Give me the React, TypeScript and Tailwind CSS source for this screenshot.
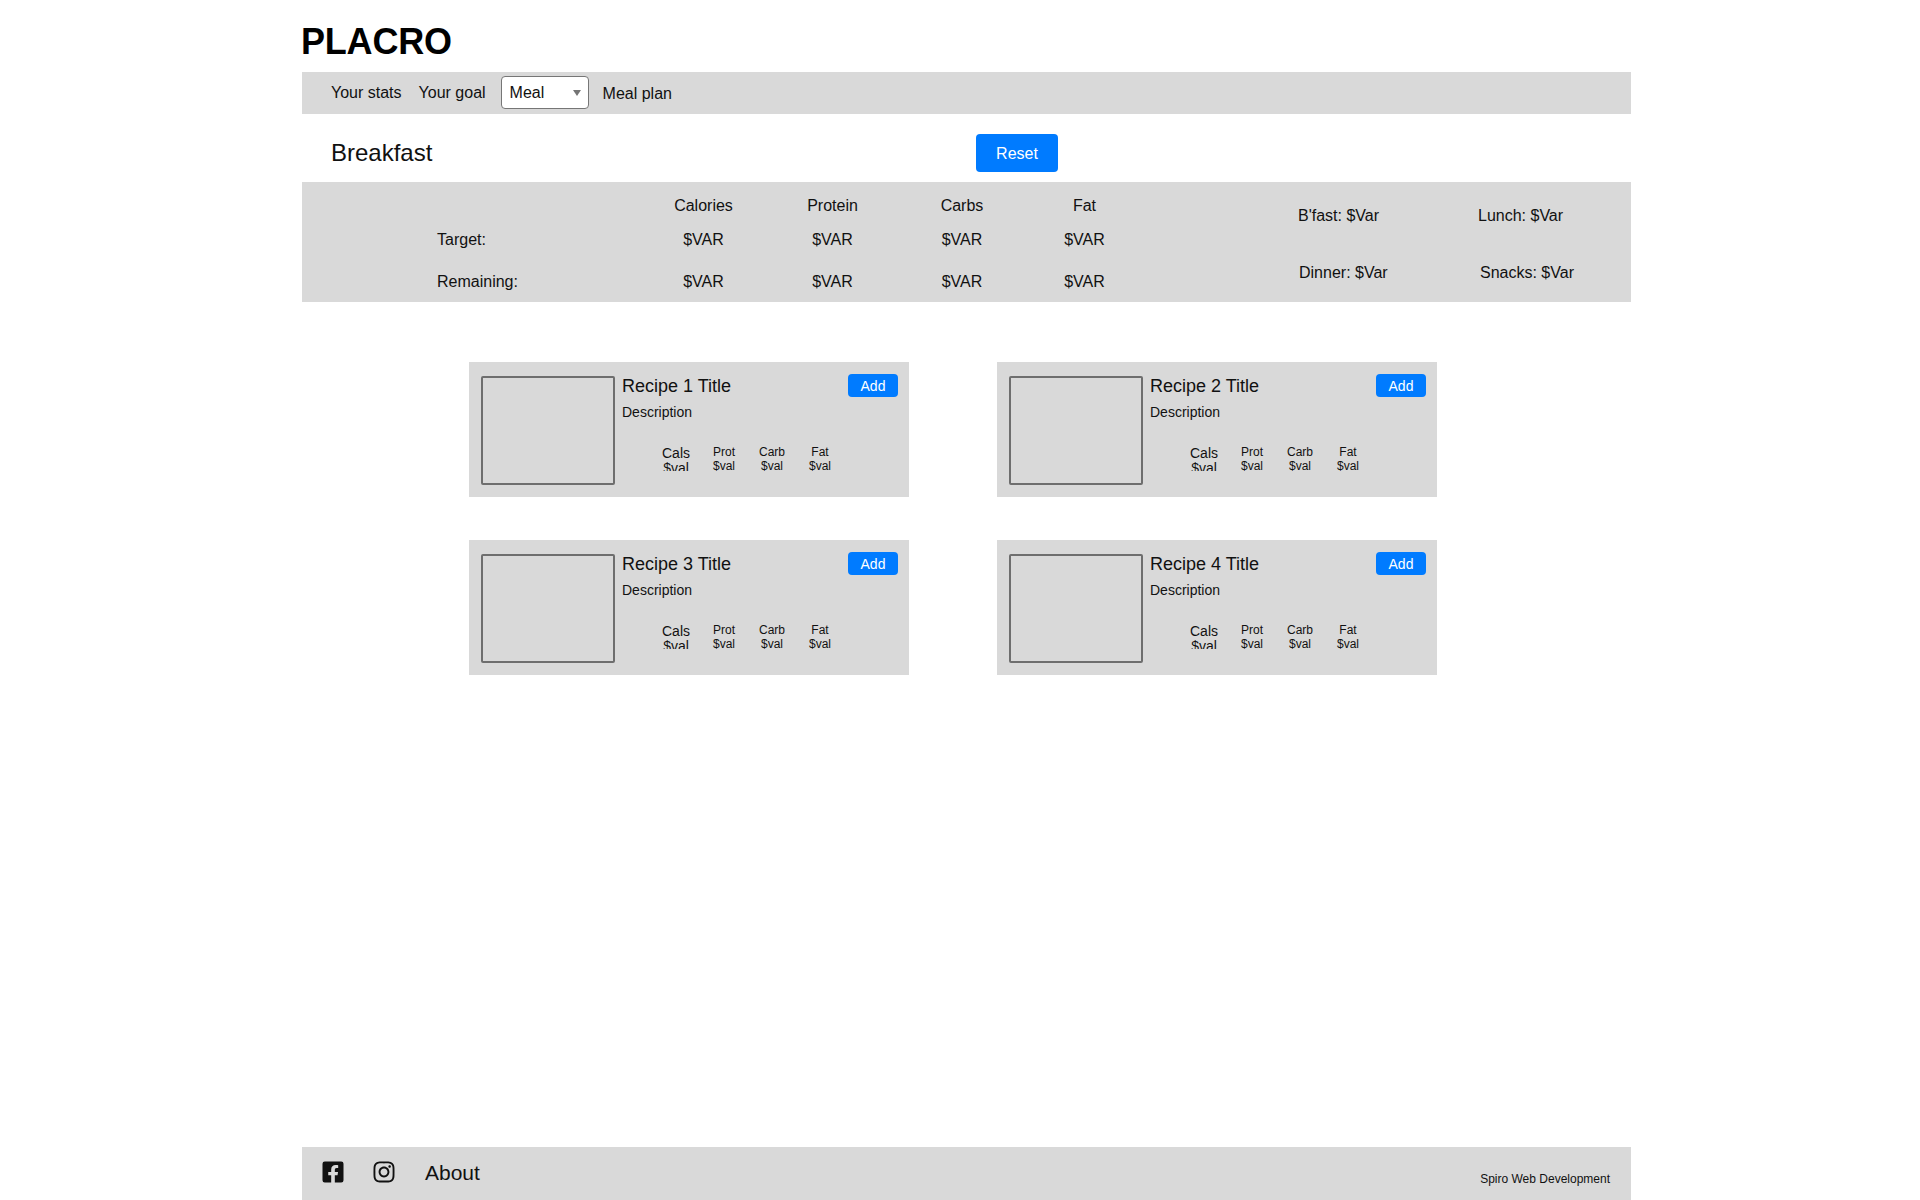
import { FaFacebookSquare, FaInstagram } from "react-icons/fa";

const FONT = "[font-family:'Liberation_Sans',Arial,sans-serif]";

function RecipeCard({ n }: { n: number }) {
  return (
    <div className="flex w-[440px] h-[135px] bg-[#d9d9d9] pt-[14px] pl-[12px]">
      <div className="w-[134px] h-[109px] border-2 border-[#6e6e6e] rounded-[2px] shrink-0" />
      <div className="ml-[7px] w-[276px] flex flex-col">
        <div className="flex justify-between items-start">
          <div className="text-[18px] leading-[20px] text-[#111] mt-0">Recipe {n} Title</div>
          <button className="w-[50px] h-[23px] bg-[#007bff] rounded-[4px] text-white text-[14px] leading-[24px] -mt-[2px]">
            Add
          </button>
        </div>
        <div className="text-[14px] leading-[16px] text-[#111] mt-[7px]">Description</div>
        <div className="flex ml-[30px] mt-[25px] text-[#111]">
          <div className="w-[48px] h-[25px] overflow-hidden text-center text-[14px] leading-[15px] mt-[1px]">
            <div>Cals</div>
            <div>$val</div>
          </div>
          {["Prot", "Carb", "Fat"].map((m) => (
            <div key={m} className="w-[48px] text-center text-[12px] leading-[14px]">
              <div>{m}</div>
              <div>$val</div>
            </div>
          ))}
        </div>
      </div>
    </div>
  );
}

export default function App() {
  const rows = [
    ["", "Calories", "Protein", "Carbs", "Fat"],
    ["Target:", "$VAR", "$VAR", "$VAR", "$VAR"],
    ["Remaining:", "$VAR", "$VAR", "$VAR", "$VAR"],
  ];
  return (
    <div className={`${FONT} min-h-screen flex flex-col items-start bg-white text-[#111]`}>
      <div className="ml-[302px] w-[1329px] h-[1200px] flex flex-col">
        <h1 className="h-[72px] pt-[20px] -ml-[1px] text-[36px] leading-[44px] font-bold text-black tracking-[-0.2px]">PLACRO</h1>

        <nav className="h-[42px] bg-[#d9d9d9] flex items-center pl-[29px] text-[16px]">
          <span>Your stats</span>
          <span className="ml-[17px]">Your goal</span>
          <div className="relative ml-[15px] -mt-[1px] w-[88px] h-[33px] bg-white border border-[#767676] rounded-[4px] flex items-center pl-[8px]">
            <span>Meal</span>
            <span className="absolute right-[7px] top-[13px] w-0 h-0 border-l-[4px] border-r-[4px] border-t-[6px] border-l-transparent border-r-transparent border-t-[#757575]" />
          </div>
          <span className="ml-[14px] mt-[2px]">Meal plan</span>
        </nav>

        <div className="h-[68px] flex items-center pl-[29px]">
          <h2 className="text-[24px] leading-[28px] w-[645px] mt-[9px]">Breakfast</h2>
          <button className="w-[82px] h-[38px] bg-[#007bff] rounded-[4px] text-white text-[16px] pt-[2px] mt-[10px]">Reset</button>
        </div>

        <section className="h-[120px] bg-[#d9d9d9] flex text-[16px]">
          <div className="ml-[135px] pt-[13px] grid grid-cols-[202px_129px_129px_130px_115px] auto-rows-min">
            {rows.map((r, i) =>
              r.map((c, j) => (
                <div
                  key={`${i}-${j}`}
                  className={`${j === 0 ? "text-left" : "text-center"} leading-[22px] ${i === 0 ? "h-[34px]" : i === 1 ? "h-[42px]" : "h-[22px]"}`}
                >
                  {c}
                </div>
              ))
            )}
          </div>
          <div className="ml-[156px] pt-[23px] flex flex-col gap-[35px] leading-[22px]">
            <div className="flex">
              <span className="w-[180px]">B'fast: $Var</span>
              <span>Lunch: $Var</span>
            </div>
            <div className="flex ml-[1px]">
              <span className="w-[181px]">Dinner: $Var</span>
              <span>Snacks: $Var</span>
            </div>
          </div>
        </section>

        <main className="pt-[60px] pl-[167px] grid grid-cols-[440px_440px] gap-x-[88px] gap-y-[43px] justify-start">
          {[1, 2, 3, 4].map((n) => (
            <RecipeCard key={n} n={n} />
          ))}
        </main>

        <footer className="mt-auto h-[53px] bg-[#d9d9d9] flex items-center pl-[19px]">
          <FaFacebookSquare className="w-[24px] h-[24px] text-[#111] -mt-[4px]" />
          <FaInstagram className="w-[24px] h-[24px] ml-[27px] text-[#111] -mt-[4px]" />
          <span className="ml-[29px] text-[21px] leading-[24px] -mt-[2px]">About</span>
          <span className="ml-auto mr-[21px] mt-[10px] text-[12px] leading-[14px]">Spiro Web Development</span>
        </footer>
      </div>
    </div>
  );
}
